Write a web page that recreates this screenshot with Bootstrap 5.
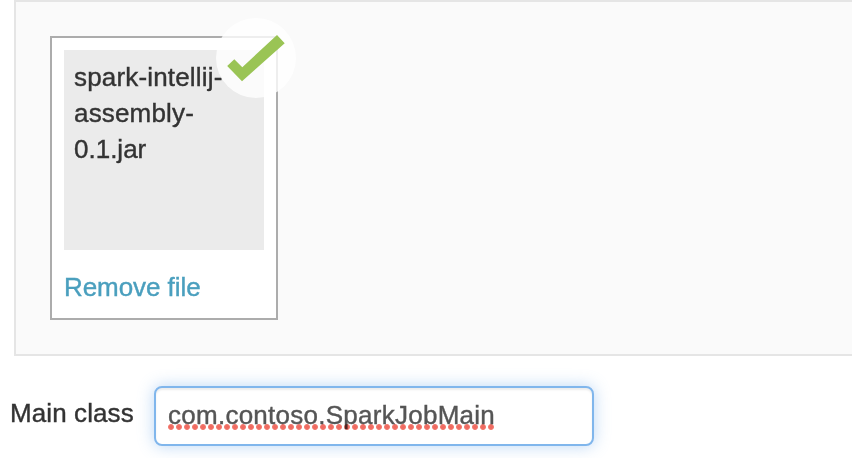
<!DOCTYPE html>
<html lang="en">
<head>
<meta charset="utf-8">
<meta name="viewport" content="width=device-width, initial-scale=1">
<title>Submit job</title>
<link href="https://cdn.jsdelivr.net/npm/bootstrap@5.3.0/dist/css/bootstrap.min.css" rel="stylesheet">
<style>
body{font-family:"Liberation Sans",Arial,sans-serif;font-size:26px;line-height:36px;color:#333;background:#fff;height:458px;-webkit-text-stroke:.4px currentColor}
.upload-zone{margin-left:14px;height:356px;padding:34px;background:#fafafa;border:2px solid #e5e5e5;border-right:0}
.file-box{width:228px;height:284px;padding:12px;background:#fff;border:2px solid #acacac}
.file-details{height:200px;padding:9px 10px;background:#ebebeb}
.file-name{width:160px}
.name-wide{letter-spacing:.17px}
.remove-link{margin-top:19px;color:#4a9fbe;letter-spacing:-.06px}
.done-mark{top:-20px;right:-20px;width:80px;height:80px}
.class-row{margin-top:30px;padding-left:10px}
.class-label{width:144px;margin-top:-7px;letter-spacing:.1px}
.class-field{width:440px}
.class-input,.class-input:focus{height:60px;padding:0 12px 1px;font-size:26px;letter-spacing:.26px;color:#555;-webkit-text-stroke:.4px #555;background:#fff;border:2px solid #80b6ec;border-radius:8px;box-shadow:inset 0 2px 2px rgba(0,0,0,.075),0 0 16px rgba(102,165,233,.45)}
/* spelling underline */
.spell-dots{left:14px;top:38px;width:326px;height:6px;background:radial-gradient(circle at 3px 3px,#ef6a60 1.3px,#f27a70 2.5px,rgba(245,130,120,0) 3.4px) 0 0/8px 6px;mix-blend-mode:multiply;pointer-events:none}
</style>
</head>
<body class="overflow-hidden">
<main>
  <section class="upload-zone">
    <div class="file-box position-relative d-flex flex-column">
      <div class="file-details"><div class="file-name"><span class="name-wide">spark-intellij-<br>assembly-</span><br>0.1.jar</div></div>
      <a class="remove-link text-decoration-none" href="#">Remove file</a>
      <svg class="done-mark position-absolute" viewBox="0 0 80 80" aria-hidden="true">
        <circle cx="40" cy="40" r="40" fill="#fff" fill-opacity=".8"/>
        <path d="M11.2 48 18.3 41.2 26.3 49.2 61 17 68.7 25.3 26 63.2Z" fill="#9ac455"/>
      </svg>
    </div>
  </section>
  <form class="class-row d-flex align-items-center">
    <label class="class-label" for="mainClass">Main class</label>
    <div class="class-field position-relative">
      <input id="mainClass" class="class-input form-control" type="text" value="com.contoso.SparkJobMain" spellcheck="false">
      <span class="spell-dots position-absolute"></span>
    </div>
  </form>
</main>
<script src="https://cdn.jsdelivr.net/npm/bootstrap@5.3.0/dist/js/bootstrap.bundle.min.js"></script>
</body>
</html>
